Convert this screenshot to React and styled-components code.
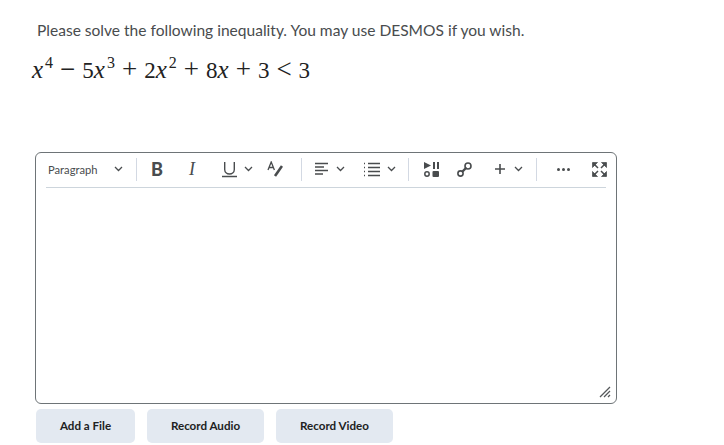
import React from 'react';
import styled, { createGlobalStyle } from 'styled-components';

const Global = createGlobalStyle`
  html, body { margin: 0; padding: 0; background: #fff; }
  body { font-family: Lato, "Liberation Sans", sans-serif; color: #494c4e; }
`;

const Page = styled.div`
  width: 724px;
  height: 445px;
  overflow: hidden;
  padding: 20px 0 0 35px;
  box-sizing: border-box;
`;
const Question = styled.p`
  margin: 0 0 0 2px;
  font-size: 15.55px;
  line-height: 20px;
  color: #494c4e;
`;
const Formula = styled.div`
  margin: 12px 0 0 -3px;
  height: 35px;
  white-space: nowrap;
  font-family: "Liberation Serif", "Times New Roman", serif;
  font-size: 23px;
  line-height: 36px;
  color: #222;
`;
const Var = styled.i`
  font-size: 25px;
`;
const Sup = styled.sup`
  font-size: 16px;
  line-height: 0;
  vertical-align: 10px;
  margin-left: 2px;
`;
const Op = styled.span`
  margin: 0 7px;
  font-size: 27px;
  line-height: 0;
`;
const Editor = styled.div`
  margin-top: 65px;
  width: 582px;
  height: 252px;
  box-sizing: border-box;
  border: 1px solid #6e7477;
  border-radius: 6px;
  position: relative;
`;
const Toolbar = styled.div`
  margin: 0 10px;
  height: 32px;
  padding-bottom: 2px;
  border-bottom: 1px solid #cdd5dc;
  display: flex;
  align-items: center;
`;
const Select = styled.div`
  width: 90px;
  flex: none;
  padding: 0 13px 0 2px;
  box-sizing: border-box;
  display: flex;
  align-items: center;
  justify-content: space-between;
  font-size: 11.2px;
  color: #494c4e;
`;
const Sep = styled.div`
  width: 1px;
  height: 23px;
  background: #d3d9e3;
  margin-left: ${p => p.$ml || 0}px;
  flex: none;
`;
const Slot = styled.div`
  width: ${p => p.$w}px;
  margin-left: ${p => p.$ml || 0}px;
  flex: none;
  display: flex;
  align-items: center;
  justify-content: center;
  gap: ${p => p.$gap || 0}px;
  color: #494c4e;
`;
const Letter = styled.span`
  font-family: ${p => (p.$serif ? '"Liberation Serif", serif' : 'Lato, sans-serif')};
  font-size: 18px;
  font-weight: ${p => (p.$bold ? 900 : 400)};
  font-style: ${p => (p.$italic ? 'italic' : 'normal')};
  line-height: 20px;
`;
const Grip = styled.svg`
  position: absolute;
  right: 5px;
  bottom: 5px;
`;
const Actions = styled.div`
  margin: 5px 0 0 1px;
  display: flex;
  gap: 12px;
`;
const Action = styled.button`
  width: ${p => p.$w}px;
  height: 34px;
  border: 0;
  border-radius: 5px;
  background: #e3e9f1;
  color: #202122;
  font-family: Lato, sans-serif;
  font-size: 11.6px;
  font-weight: 700;
  padding: 0 0 2px;
`;

const Chevron = () => (
  <svg width="9" height="6" viewBox="0 0 9 6" fill="none" stroke="#494c4e" strokeWidth="1.3">
    <path d="M1 1l3.5 3.5L8 1" />
  </svg>
);
const Underline = () => (
  <svg width="15" height="17" viewBox="0 0 15 17" fill="none" stroke="#494c4e">
    <path d="M2.7 1v7.5a4.8 4.5 0 0 0 9.6 0V1" strokeWidth="1.4" />
    <path d="M0 15.5h15" strokeWidth="1.5" />
  </svg>
);
const TextColor = () => (
  <svg width="16" height="16" viewBox="0 0 16 16" fill="none" stroke="#494c4e">
    <path d="M1 9l3.2-8 3.2 8M2.3 6.5h4" strokeWidth="1.3" />
    <path d="M15 5L8 15" strokeWidth="2.6" />
  </svg>
);
const AlignLeft = () => (
  <svg width="15" height="15" viewBox="0 0 15 15" fill="none" stroke="#494c4e" strokeWidth="1.5">
    <path d="M1 1.5h13M1 5h9M1 8.5h13M1 12h8" />
  </svg>
);
const List = () => (
  <svg width="18" height="15" viewBox="0 0 18 15" fill="none" stroke="#494c4e">
    <path d="M5 1.5h12M5 5.5h12M5 9.5h12M5 13.5h12" strokeWidth="1.5" />
    <path d="M1 1.5h2M1 5.5h2M1 9.5h2M1 13.5h2" strokeWidth="1.5" strokeDasharray="1 1" />
  </svg>
);
const Media = () => (
  <svg width="15" height="15" viewBox="0 0 15 15" fill="#494c4e">
    <path d="M0 0l7 3.5L0 7z" />
    <rect x="9" y="0" width="2" height="7" />
    <rect x="13" y="0" width="2" height="7" />
    <circle cx="3" cy="12" r="2.2" fill="none" stroke="#494c4e" strokeWidth="1.5" />
    <rect x="8.5" y="9" width="6.5" height="6" rx="1" />
  </svg>
);
const Link = () => (
  <svg width="15" height="15" viewBox="0 0 15 15" fill="none" stroke="#494c4e" strokeWidth="1.6">
    <circle cx="3.5" cy="11.5" r="2.6" />
    <circle cx="11" cy="4" r="3" />
    <path d="M5.5 9.5l4-4" strokeWidth="2.4" />
  </svg>
);
const Plus = () => (
  <svg width="12" height="12" viewBox="0 0 12 12" fill="none" stroke="#494c4e" strokeWidth="1.6">
    <path d="M6 1v10M1 6h10" />
  </svg>
);
const Dots = () => (
  <svg width="13" height="3" viewBox="0 0 13 3" fill="#494c4e">
    <circle cx="1.5" cy="1.5" r="1.5" />
    <circle cx="6.5" cy="1.5" r="1.5" />
    <circle cx="11.5" cy="1.5" r="1.5" />
  </svg>
);
const Fullscreen = () => (
  <svg width="15" height="15" viewBox="0 0 15 15" fill="#494c4e" stroke="#494c4e">
    <path d="M0.5 0.5h5L0.5 5.5zM14.5 0.5h-5l5 5zM0.5 14.5h5l-5-5zM14.5 14.5h-5l5-5z" strokeWidth="0.7" />
    <path d="M1 1l5 5M14 1L9 6M1 14l5-5M14 14L9 9" strokeWidth="1.5" fill="none" />
  </svg>
);

export default function App() {
  return (
    <Page>
      <Global />
      <Question>Please solve the following inequality. You may use DESMOS if you wish.</Question>
      <Formula>
        <Var>x</Var><Sup>4</Sup><Op>−</Op>5<Var>x</Var><Sup>3</Sup><Op>+</Op>2<Var>x</Var><Sup>2</Sup>
        <Op>+</Op>8<Var>x</Var><Op>+</Op>3<Op>&lt;</Op>3
      </Formula>
      <Editor>
        <Toolbar>
          <Select>Paragraph <Chevron /></Select>
          <Sep />
          <Slot $w={40}><Letter $bold>B</Letter></Slot>
          <Slot $w={30}><Letter $italic $serif>I</Letter></Slot>
          <Slot $w={60} $gap={7}><Underline /><Chevron /></Slot>
          <Slot $w={16}><TextColor /></Slot>
          <Sep $ml={18} />
          <Slot $w={54} $gap={7}><AlignLeft /><Chevron /></Slot>
          <Slot $w={46} $gap={6}><List /><Chevron /></Slot>
          <Sep $ml={6} />
          <Slot $w={44}><Media /></Slot>
          <Slot $w={22}><Link /></Slot>
          <Slot $w={50} $ml={8} $gap={8}><Plus /><Chevron /></Slot>
          <Sep $ml={3} />
          <Slot $w={53}><Dots /></Slot>
          <Slot $w={18}><Fullscreen /></Slot>
        </Toolbar>
        <Grip width="12" height="12" viewBox="0 0 12 12" stroke="#55585a" strokeWidth="1.3">
          <path d="M1 11L11 1M5 11l6-6M9 11l2-2" />
        </Grip>
      </Editor>
      <Actions>
        <Action $w={99}>Add a File</Action>
        <Action $w={117}>Record Audio</Action>
        <Action $w={117}>Record Video</Action>
      </Actions>
    </Page>
  );
}
